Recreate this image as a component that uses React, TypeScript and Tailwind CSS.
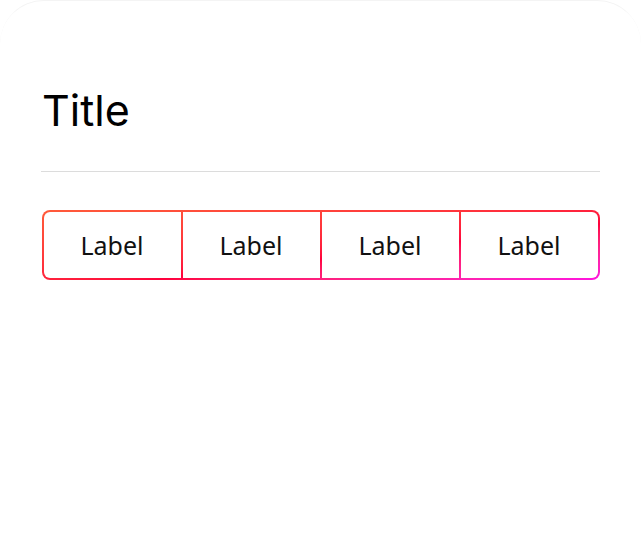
export default function App() {
  const labels = ["Label", "Label", "Label", "Label"];
  return (
    <div className="w-[641px] h-[558px] bg-white overflow-hidden">
      <div className="h-[620px] rounded-[44px] border-t border-[#f4f4f4] bg-white px-[41px] pt-[84px]">
        <h1
          className="text-[43px] leading-[50px] text-black font-normal m-0 pl-[1px]"
          style={{ fontFamily: "Inter, Roboto, sans-serif" }}
        >
          Title
        </h1>
        <div className="mt-[36px] h-[1px] bg-[#dcdcdc]" />
        <div className="mt-[38px] ml-[1px] rounded-[8px] p-[2px] bg-linear-to-br from-[#ff5a3a] via-[#ff003c] via-60% to-[#ff10e0]">
          <div className="grid grid-cols-4 gap-[2px] rounded-[6px] overflow-hidden">
            {labels.map((l, i) => (
              <div
                key={i}
                className="h-[66px] bg-white flex items-center justify-center text-[25px] text-[#111]"
                style={{ fontFamily: "'Noto Sans', sans-serif" }}
              >
                <span className="-ml-[1px] mt-[1px]">{l}</span>
              </div>
            ))}
          </div>
        </div>
      </div>
    </div>
  );
}
